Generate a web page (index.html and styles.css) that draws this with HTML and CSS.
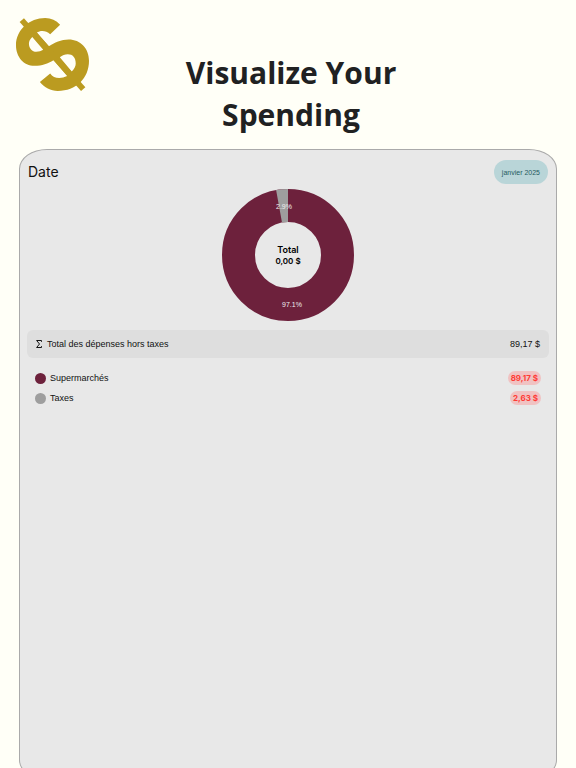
FILE: index.html
```html
<!DOCTYPE html>
<html lang="fr">
<head>
    <meta charset="UTF-8">
    <meta name="viewport" content="width=device-width, initial-scale=1.0">
    <title>Visualize Your Spending</title>
    <link rel="stylesheet" href="styles.css">
</head>
<body>
    <header class="header">
        <svg class="logo" viewBox="46 50 226 226" aria-hidden="true">
            <path d="M182 73L152 102C140 90 122 90 112 97L148 138C165 128 185 118 208 118C243 118 269 145 269 182C269 235 230 273 175 273C153 273 135 262 121 246L152 220C162 236 184 237 203 228L162 180C145 190 128 197 105 197C72 197 49 170 49 135C49 88 90 53 137 53C155 53 170 60 182 73ZM98 110C91 117 88 123 88 130C88 145 98 155 110 155C118 155 125 153 131 149ZM181 171L217 214C225 206 229 198 229 190C229 172 220 162 205 162C196 162 189 166 181 171Z"/>
            <path d="M60 65L73 54L258 262L245 273Z"/>
        </svg>
        <h1 class="title">Visualize Your Spending</h1>
    </header>

    <main class="card">
        <div class="date-bar">
            <h2 class="date-label">Date</h2>
            <button type="button" class="month">janvier 2025</button>
        </div>

        <svg class="chart" viewBox="0 0 132 132" role="img" aria-label="Total 0,00 $">
            <circle class="slice-main" cx="66" cy="66" r="49.5"/>
            <path class="slice-taxes" d="M66 0A66 66 0 0 0 54.1 1.1L60 33.5A33 33 0 0 1 66 33Z"/>
            <text class="percent" x="62" y="20">2.9%</text>
            <text class="percent" x="70" y="118">97.1%</text>
            <text class="total" x="66" y="64">Total</text>
            <text class="total amount" x="66" y="75">0,00 $</text>
        </svg>

        <div class="summary">
            <svg class="sigma" viewBox="0 0 6 8" aria-hidden="true">
                <path d="M5.5 1.8V.5H.6L3.5 4L.6 7.5H5.5V6.2"/>
            </svg>
            <span>Total des dépenses hors taxes</span>
            <span class="value">89,17 $</span>
        </div>

        <ul class="categories">
            <li class="category">
                <span class="dot dot-main"></span>
                <span>Supermarchés</span>
                <span class="badge">89,17 $</span>
            </li>
            <li class="category">
                <span class="dot dot-taxes"></span>
                <span>Taxes</span>
                <span class="badge">2,63 $</span>
            </li>
        </ul>
    </main>
</body>
</html>
```
FILE: styles.css
```css
* {
    box-sizing: border-box;
}
body {
    display: flex;
    flex-direction: column;
    height: 100vh;
    margin: 0;
    padding: 0 19px;
    overflow: hidden;
    background-color: #fffff7;
    color: #111;
    font-family: "Liberation Sans", Arial, sans-serif;
    font-size: 9px;
}
.header {
    display: grid;
    grid-template-columns: 72px 1fr 66px;
    align-items: start;
    flex-shrink: 0;
    padding: 17px 0 13px;
}
.logo {
    width: 75px;
    height: 75px;
    margin-left: -4px;
    fill: #bb9b20;
}
.title {
    max-width: 260px;
    margin: 35px auto 0;
    color: #202122;
    font-family: "Open Sans", sans-serif;
    font-size: 30px;
    line-height: 42px;
    font-weight: 700;
    text-align: center;
}
.card {
    flex: 1 0 auto;
    margin-bottom: -12px;
    padding: 10px 7px;
    background-color: #e8e8e8;
    border: 1px solid #aaa;
    border-radius: 28px / 20px;
}
.date-bar {
    display: flex;
    align-items: center;
    justify-content: space-between;
    padding: 0 1px;
}
.date-label {
    margin: 0;
    font-family: Inter, sans-serif;
    font-size: 14px;
    line-height: 16px;
    font-weight: 400;
}
.month {
    height: 24px;
    padding: 0 8px;
    background-color: #b9d5d8;
    color: #245b60;
    border: none;
    border-radius: 12px;
    font-family: inherit;
    font-size: 7px;
    cursor: pointer;
}
.chart {
    display: block;
    width: 132px;
    height: 132px;
    margin: 5px auto 9px;
}
.slice-main {
    fill: none;
    stroke: #6d213c;
    stroke-width: 33px;
}
.slice-taxes {
    fill: #9e9e9e;
}
.percent {
    fill: #eee;
    font-size: 7px;
    text-anchor: middle;
}
.total {
    font-family: Inter, sans-serif;
    font-size: 9px;
    font-weight: 600;
    text-anchor: middle;
}
.amount {
    font-size: 8px;
}
.summary {
    display: flex;
    align-items: center;
    height: 28px;
    padding: 0 9px;
    background-color: #dedede;
    border-radius: 6px;
}
.sigma {
    width: 6px;
    height: 8px;
    margin-right: 5px;
    fill: none;
    stroke: #111;
}
.value {
    margin-left: auto;
}
.categories {
    display: flex;
    flex-direction: column;
    gap: 6px;
    margin: 13px 0 0;
    padding: 0 8px;
    list-style: none;
}
.category {
    display: flex;
    align-items: center;
    gap: 4px;
    height: 14px;
}
.dot {
    width: 11px;
    height: 11px;
    border-radius: 50%;
}
.dot-main {
    background-color: #6d213c;
}
.dot-taxes {
    background-color: #9e9e9e;
}
.badge {
    margin-left: auto;
    padding: 0 3px;
    background-color: #f0c2c2;
    color: #ff3b35;
    border-radius: 7px;
    font-family: Inter, sans-serif;
    font-size: 8px;
    line-height: 14px;
    font-weight: 700;
}
```
